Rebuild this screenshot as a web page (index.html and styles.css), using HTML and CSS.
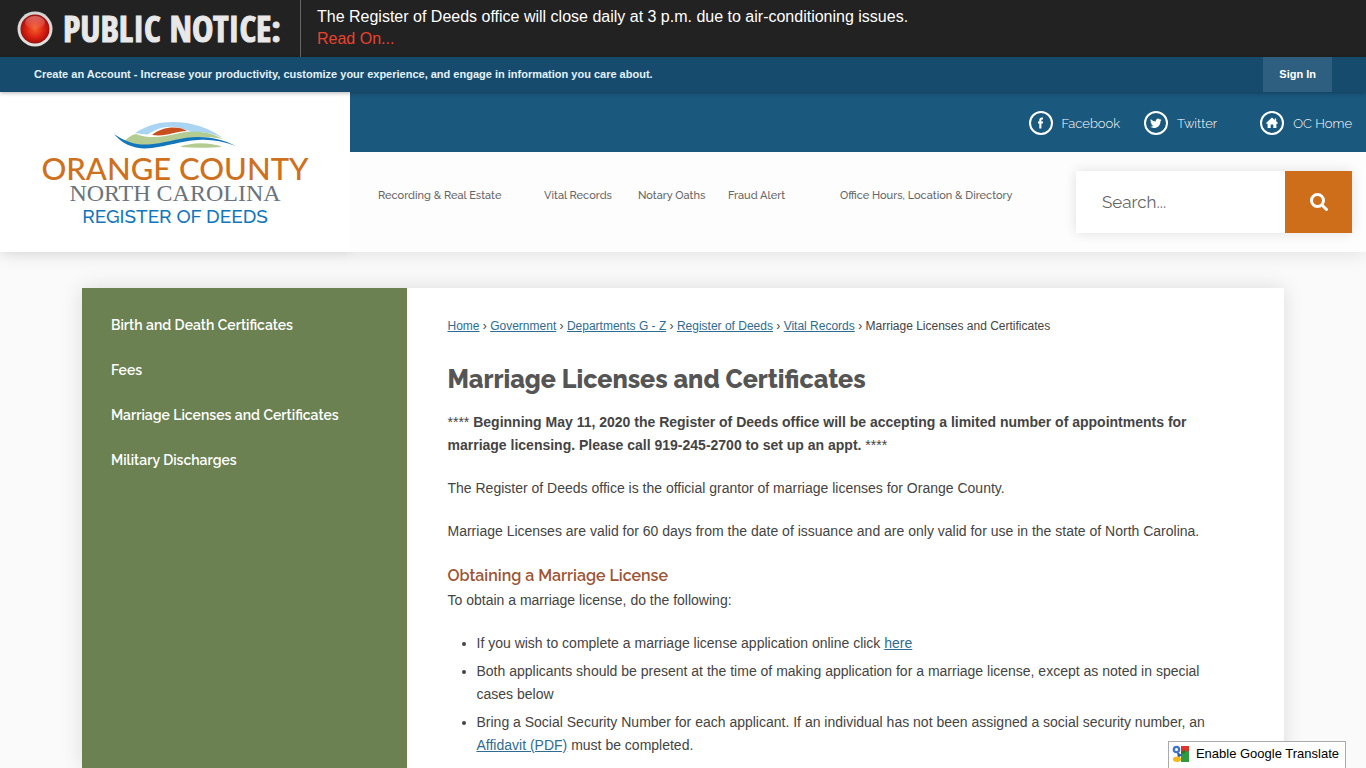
FILE: index.html
```html
<!DOCTYPE html>
<html lang="en">
<head>
  <meta charset="UTF-8">
  <meta name="viewport" content="width=device-width, initial-scale=1.0">
  <title>Marriage Licenses and Certificates | Orange County, NC</title>
  <link rel="stylesheet" href="styles.css">
</head>
<body>
  <div class="alert-bar">
    <div class="alert-title">
      <svg class="alert-light" viewBox="0 0 36 36" aria-hidden="true">
        <defs>
          <linearGradient id="ring" x1="0" y1="0" x2="0" y2="1">
            <stop offset="0" stop-color="#d2d2d2"/>
            <stop offset="1" stop-color="#e4e2de"/>
          </linearGradient>
          <radialGradient id="glow" cx="0.5" cy="0.5" r="0.55">
            <stop offset="0" stop-color="#f4612c"/>
            <stop offset="0.55" stop-color="#dc2413"/>
            <stop offset="1" stop-color="#a50a08"/>
          </radialGradient>
          <linearGradient id="shine" x1="0" y1="0" x2="0" y2="1">
            <stop offset="0" stop-color="#fff" stop-opacity="0.35"/>
            <stop offset="1" stop-color="#fff" stop-opacity="0.05"/>
          </linearGradient>
        </defs>
        <circle cx="18" cy="18" r="17.5" fill="url(#ring)"/>
        <circle cx="18" cy="18" r="14.5" fill="#8e1714"/>
        <circle cx="18" cy="18" r="13.8" fill="url(#glow)"/>
        <ellipse cx="18" cy="11.5" rx="10" ry="6.5" fill="url(#shine)"/>
      </svg>
      <span>PUBLIC NOTICE:</span>
    </div>
    <div class="alert-text">
      <span>The Register of Deeds office will close daily at 3 p.m. due to air-conditioning issues.</span>
      <a href="#">Read On...</a>
    </div>
  </div>

  <div class="account-bar">
    <p><a href="#">Create an Account</a> - Increase your productivity, customize your experience, and engage in information you care about.</p>
    <a class="sign-in" href="#">Sign In</a>
  </div>

  <header class="header">
    <a class="logo" href="#">
      <svg class="logo-hills" viewBox="0 0 122 27" aria-hidden="true">
        <path d="M21 11C33 3 46 0 59 0c19 0 36 6 50 16-8-4-17-6-27-6-17 0-30 6-61 1z" fill="#a9d5f2"/>
        <path d="M32 14c10-8 23-11 34-8 4 1 8 3 12 3-12 1-24 8-46 5z" fill="#fff"/>
        <path d="M38 13c9-8 26-10 35-4-12 0-20 6-35 4z" fill="#c8501e"/>
        <path d="M10 19c4-3 7-6 12-7 16 6 30 2 44-1 16-3 31-1 43 6-14-3-28-2-41 2-19 6-39 8-58 0z" fill="#b4cb92"/>
        <path d="M66 25c12-5 30-5 42 0-12 1-28 1-42 0z" fill="#b4cb92"/>
        <path d="M0 12c13 9 25 12 39 10 17-2 29-7 45-7 14 0 26 3 38 9-14-5-26-7-38-6-18 1-29 6-46 8C22 28 9 23 0 12z" fill="#1176bc"/>
      </svg>
      <span class="logo-county">ORANGE COUNTY</span>
      <span class="logo-state">NORTH CAROLINA</span>
      <span class="logo-dept">REGISTER OF DEEDS</span>
    </a>
    <div class="header-main">
      <div class="social">
        <a href="#">
          <svg viewBox="0 0 24 24" aria-hidden="true">
            <circle cx="12" cy="12" r="11" fill="none" stroke="#fff" stroke-width="2"/>
            <path d="M10.300 17.500v-5H9v-2h1.300V9.300c0-1.900 1-2.800 2.600-2.800h1.100v2h-.7c-.7 0-.9.3-.9.900v1.100h1.700l-.3 2h-1.400v5z" fill="#fff"/>
          </svg>
          <span>Facebook</span>
        </a>
        <a href="#">
          <svg viewBox="0 0 24 24" aria-hidden="true">
            <circle cx="12" cy="12" r="11" fill="none" stroke="#fff" stroke-width="2"/>
            <path d="M17.600 8.700c-.4.200-.9.300-1.300.4.500-.3.800-.7 1-1.300-.5.300-1 .5-1.500.6a2.400 2.400 0 0 0-4.100 2.100C9.700 10.400 8 9.500 6.800 8a2.300 2.300 0 0 0 .7 3.100c-.4 0-.7-.1-1-.3 0 1.200.8 2.100 1.900 2.300-.4.100-.7.100-1.100 0 .3 1 1.200 1.600 2.200 1.700a4.700 4.700 0 0 1-3.500 1c4.700 2.900 10.500.1 10.500-5.900.4-.3.800-.7 1.100-1.200z" fill="#fff"/>
          </svg>
          <span>Twitter</span>
        </a>
        <a class="home-link" href="#">
          <svg viewBox="0 0 24 24" aria-hidden="true">
            <circle cx="12" cy="12" r="11" fill="none" stroke="#fff" stroke-width="2"/>
            <path d="M12 6.500l2.700 2.400V7.500h1.500v2.700L18 12l-.6.700h-1V17h-3.100v-3.400h-2.600V17H7.600v-4.300h-1L6 12z" fill="#fff"/>
          </svg>
          <span>OC Home</span>
        </a>
      </div>
      <div class="nav-row">
        <nav class="main-nav">
          <a href="#">Recording &amp; Real Estate</a>
          <a href="#">Vital Records</a>
          <a href="#">Notary Oaths</a>
          <a href="#">Fraud Alert</a>
          <a href="#">Office Hours, Location &amp; Directory</a>
        </nav>
        <form class="search">
          <input type="text" placeholder="Search..." aria-label="Search">
          <button type="submit" aria-label="Search">
            <svg viewBox="0 0 18 18" aria-hidden="true">
              <circle cx="7.500" cy="7.500" r="6" fill="none" stroke="#fff" stroke-width="3"/>
              <path d="M12 12l4.500 4.500" stroke="#fff" stroke-width="3" stroke-linecap="round"/>
            </svg>
          </button>
        </form>
      </div>
    </div>
  </header>

  <div class="page">
    <nav class="side-nav">
      <a href="#">Birth and Death Certificates</a>
      <a href="#">Fees</a>
      <a href="#">Marriage Licenses and Certificates</a>
      <a href="#">Military Discharges</a>
    </nav>
    <main class="content">
      <div class="breadcrumbs">
        <a href="#">Home</a> ›
        <a href="#">Government</a> ›
        <a href="#">Departments G - Z</a> ›
        <a href="#">Register of Deeds</a> ›
        <a href="#">Vital Records</a> ›
        <span>Marriage Licenses and Certificates</span>
      </div>
      <h1>Marriage Licenses and Certificates</h1>
      <p>**** <strong>Beginning May 11, 2020 the Register of Deeds office will be accepting a limited number of appointments for marriage licensing. Please call 919-245-2700 to set up an appt.</strong> ****</p>
      <p>The Register of Deeds office is the official grantor of marriage licenses for Orange County.</p>
      <p>Marriage Licenses are valid for 60 days from the date of issuance and are only valid for use in the state of North Carolina.</p>
      <h2>Obtaining a Marriage License</h2>
      <p>To obtain a marriage license, do the following:</p>
      <ul>
        <li>If you wish to complete a marriage license application online click <a href="#">here</a></li>
        <li>Both applicants should be present at the time of making application for a marriage license, except as noted in special cases below</li>
        <li>Bring a Social Security Number for each applicant. If an individual has not been assigned a social security number, an <a href="#">Affidavit (PDF)</a> must be completed.</li>
      </ul>
    </main>
  </div>

  <button class="translate" type="button">
    <svg viewBox="0 0 18 18" aria-hidden="true">
      <path d="M9 1h8v7H9z" fill="#e0352b"/>
      <path d="M9 8l8-2v11H9z" fill="#2f9a3e"/>
      <path d="M9 7l4-2v3l-4 1z" fill="#1f7a30"/>
      <circle cx="4.500" cy="4.500" r="3.800" fill="#3f74cf"/>
      <circle cx="4.500" cy="4.500" r="1.500" fill="#fff"/>
      <path d="M5 7l5 3-4 3z" fill="#2a57b5"/>
      <ellipse cx="5" cy="14.300" rx="4" ry="2.700" fill="#f3b81c"/>
    </svg>
    Enable Google Translate
  </button>
</body>
</html>
```
FILE: styles.css
```css
* {
  box-sizing: border-box;
}
body {
  margin: 0;
  min-height: 100vh;
  display: flex;
  flex-direction: column;
  background-color: #fafafa;
  font-family: "Liberation Sans", Arial, sans-serif;
  font-size: 14px;
  color: #444;
}
a {
  color: #2f6c92;
}

/* Public notice */
.alert-bar {
  display: flex;
  height: 57px;
  background-color: #222;
}
.alert-title {
  display: flex;
  align-items: center;
  gap: 10px;
  width: 301px;
  padding-left: 17px;
  border-right: 1px solid #666;
  font-family: "Open Sans Condensed", "Liberation Sans Narrow", "Open Sans", sans-serif;
  font-size: 36px;
  font-weight: 800;
  line-height: 57px;
  color: #e8e8e8;
  white-space: nowrap;
  -webkit-text-stroke: 1px #e8e8e8;
}
.alert-light {
  width: 36px;
  height: 36px;
  flex: none;
}
.alert-text {
  display: flex;
  flex-direction: column;
  padding: 6px 16px;
  font-size: 16px;
  line-height: 22px;
  color: #fff;
}
.alert-text a {
  color: #e8432e;
  text-decoration: none;
}

/* Account bar */
.account-bar {
  position: relative;
  z-index: 1;
  display: flex;
  justify-content: space-between;
  height: 35px;
  padding: 0 34px;
  background-color: #164b6e;
  box-shadow: 0 1px 4px rgba(0, 0, 0, 0.3);
  font-size: 11px;
  font-weight: bold;
  line-height: 35px;
  color: #e3f2fb;
}
.account-bar p {
  margin: 0;
}
.account-bar a {
  color: inherit;
  text-decoration: none;
}
.account-bar .sign-in {
  padding: 0 16px;
  background-color: #2f5f80;
  color: #fff;
}

/* Header */
.header {
  display: flex;
  height: 160px;
  box-shadow: 0 0 20px rgba(0, 0, 0, 0.12);
  font-family: Raleway, Lato, sans-serif;
}
.logo {
  display: flex;
  flex-direction: column;
  align-items: center;
  width: 350px;
  padding-top: 30px;
  background-color: #fff;
  box-shadow: 0 0 12px rgba(0, 0, 0, 0.08);
  text-decoration: none;
  white-space: nowrap;
}
.logo-hills {
  width: 122px;
  height: 27px;
}
.logo-county {
  margin-top: 2px;
  font-family: Lato, sans-serif;
  font-size: 31px;
  font-weight: 500;
  line-height: 34px;
  color: #cf701c;
}
.logo-state {
  font-family: "Liberation Serif", serif;
  font-size: 24px;
  line-height: 16px;
  color: #6b747c;
}
.logo-dept {
  font-size: 19px;
  font-weight: 500;
  line-height: 30px;
  color: #1176bc;
}
.header-main {
  flex: 1;
  display: flex;
  flex-direction: column;
  background-color: #fdfdfd;
}
.social {
  display: flex;
  align-items: center;
  justify-content: flex-end;
  gap: 24px;
  height: 60px;
  padding: 2px 14px 0 0;
  background-color: #1a587d;
}
.social a {
  display: flex;
  align-items: center;
  gap: 9px;
  font-size: 13px;
  font-weight: 300;
  color: #fff;
  text-decoration: none;
}
.social .home-link {
  margin-left: 19px;
}
.social svg {
  width: 24px;
  height: 24px;
}
.nav-row {
  display: flex;
  align-items: center;
  justify-content: space-between;
  height: 100px;
  padding: 0 14px 0 28px;
}
.main-nav {
  display: grid;
  grid-template-columns: 166px 94px 90px 112px auto;
  padding-bottom: 14px;
}
.main-nav a {
  font-size: 11px;
  font-weight: 500;
  color: #666;
  text-decoration: none;
}
.search {
  display: flex;
  width: 276px;
  height: 62px;
  box-shadow: 0 0 12px rgba(0, 0, 0, 0.12);
}
.search input {
  flex: 1;
  min-width: 0;
  padding: 0 26px;
  border: none;
  background-color: #fff;
  font-family: inherit;
  font-size: 17px;
  color: #555;
}
.search input::placeholder {
  color: #666;
}
.search button {
  width: 67px;
  padding: 0;
  border: none;
  background-color: #cf6e1a;
  cursor: pointer;
}
.search svg {
  display: block;
  width: 18px;
  height: 18px;
  margin: 0 auto;
}

/* Page */
.page {
  flex: 1;
  display: flex;
  width: 88%;
  margin: 36px auto 0;
  background-color: #fff;
  box-shadow: 0 0 20px rgba(0, 0, 0, 0.12);
}
.side-nav {
  display: flex;
  flex-direction: column;
  width: 27%;
  padding: 15px 29px;
  background-color: #6b8152;
  font-family: Raleway, Lato, sans-serif;
}
.side-nav a {
  font-size: 14px;
  font-weight: 600;
  line-height: 45px;
  color: #fff;
  text-decoration: none;
}
.content {
  flex: 1;
  padding: 28px 60px 0 41px;
}
.breadcrumbs {
  font-size: 12px;
  line-height: 20px;
}
h1 {
  margin: 28px 0 16px;
  font-family: Raleway, Lato, sans-serif;
  font-size: 25px;
  font-weight: 800;
  line-height: 31px;
  color: #555;
}
h2 {
  margin: 0;
  font-family: Raleway, Lato, sans-serif;
  font-size: 16px;
  font-weight: 600;
  line-height: 26px;
  color: #9c5535;
}
.content p {
  margin: 0 0 20px;
  line-height: 23px;
}
.content ul {
  margin: 0;
  padding-left: 29px;
}
.content li {
  margin-bottom: 5px;
  line-height: 23px;
}

.translate {
  position: fixed;
  right: 20px;
  bottom: 0;
  display: flex;
  align-items: center;
  gap: 6px;
  height: 27px;
  padding: 0 6px 3px 3px;
  border: 1px solid #aaa;
  border-bottom: none;
  background-color: #fff;
  font-family: "Liberation Sans", Arial, sans-serif;
  font-size: 13px;
  color: #000;
  cursor: pointer;
}
.translate svg {
  width: 18px;
  height: 18px;
}
```
